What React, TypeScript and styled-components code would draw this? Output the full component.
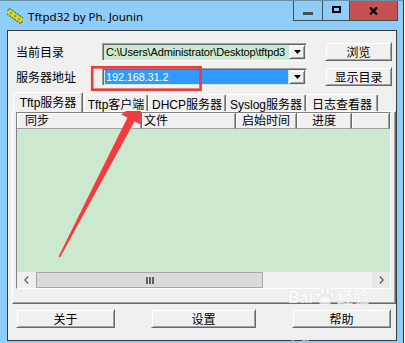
import styled, { createGlobalStyle } from "styled-components";

const GlobalStyle = createGlobalStyle`
  html, body {
    margin: 0;
    padding: 0;
    background: #ffffff;
    overflow: hidden;
  }
  #root {
    width: 405px;
    height: 343px;
    overflow: hidden;
  }
`;

const UI = `"Liberation Sans", "Noto Sans CJK SC", sans-serif`;

type Col = { label: string; width?: number; pad?: number; center?: boolean };

const columns: Col[] = [
  { label: "同步", width: 125, pad: 8 },
  { label: "文件", width: 94, pad: 2 },
  { label: "启始时间", width: 61, center: true },
  { label: "进度", width: 55, center: true },
  { label: "" },
];

const tabs = [
  { label: "Tftp服务器", width: 70, active: true },
  { label: "Tftp客户端", width: 64 },
  { label: "DHCP服务器", width: 78 },
  { label: "Syslog服务器", width: 80 },
  { label: "日志查看器", width: 72 },
];

const AppIcon = () => (
  <svg width="16" height="16" viewBox="0 0 16 16">
    <g transform="rotate(35 8 8)">
      <rect x="-1" y="5" width="18" height="6" fill="#e9d43a" stroke="#1f8a1f" strokeWidth="1.2" strokeDasharray="2 1" />
      <circle cx="3" cy="8" r="1.4" fill="#b8a010" />
      <circle cx="8" cy="8" r="1.4" fill="#b8a010" />
      <circle cx="13" cy="8" r="1.4" fill="#b8a010" />
    </g>
  </svg>
);

const DownArrow = () => (
  <svg width="7" height="4" viewBox="0 0 7 4">
    <path d="M0 0h7L3.5 4z" fill="#000" />
  </svg>
);

const Chevron = ({ right }: { right?: boolean }) => (
  <svg width="5" height="8" viewBox="0 0 5 8">
    <path d={right ? "M0.8 0.5L4.2 4L0.8 7.5" : "M4.2 0.5L0.8 4L4.2 7.5"} fill="none" stroke="#606060" strokeWidth="1.3" />
  </svg>
);

const Grip = () => (
  <svg width="8" height="7" viewBox="0 0 8 7">
    <rect x="0" y="0" width="2" height="7" fill="#606060" />
    <rect x="3" y="0" width="2" height="7" fill="#606060" />
    <rect x="6" y="0" width="2" height="7" fill="#606060" />
  </svg>
);

const Paw = () => (
  <svg width="22" height="20" viewBox="0 0 22 20">
    <g fill="#ffffff" stroke="#dcdcdc" strokeWidth="0.8">
      <ellipse cx="11" cy="14" rx="6" ry="5" />
      <ellipse cx="4" cy="8" rx="2.4" ry="3" />
      <ellipse cx="8.5" cy="4" rx="2.4" ry="3.2" />
      <ellipse cx="13.5" cy="4" rx="2.4" ry="3.2" />
      <ellipse cx="18" cy="8" rx="2.4" ry="3" />
    </g>
  </svg>
);

const App = () => {
  return (
    <>
      <GlobalStyle />
      <Window>
        <TitleBar>
          <AppIcon />
          <Title>Tftpd32 by Ph. Jounin</Title>
          <Caption>
            <CaptionButton $w={29}>
              <MinGlyph />
            </CaptionButton>
            <CaptionButton $w={27}>
              <MaxGlyph />
            </CaptionButton>
            <CaptionButton $w={49} $close>
              <svg width="9" height="8" viewBox="0 0 9 8">
                <path d="M1 0.5L8 7.5M8 0.5L1 7.5" stroke="#000" strokeWidth="2.2" />
              </svg>
            </CaptionButton>
          </Caption>
        </TitleBar>

        <Client>
          <Form>
            <Label>当前目录</Label>
            <Combo>
              <Field>C:\Users\Administrator\Desktop\tftpd3</Field>
              <DropButton>
                <DownArrow />
              </DropButton>
            </Combo>
            <Button>浏览</Button>

            <Label>服务器地址</Label>
            <Combo>
              <Field $selected>192.168.31.2</Field>
              <DropButton>
                <DownArrow />
              </DropButton>
            </Combo>
            <Button>显示目录</Button>
          </Form>

          <TabStrip>
            {tabs.map((t) => (
              <Tab key={t.label} $w={t.width} $active={!!t.active}>
                {t.label}
              </Tab>
            ))}
          </TabStrip>

          <TabPanel>
            <ListView>
              <HeaderRow>
                {columns.map((c, i) => (
                  <HeaderCell key={i} $w={c.width} $pad={c.pad} $center={c.center}>
                    {c.label}
                  </HeaderCell>
                ))}
              </HeaderRow>
              <ListBody />
              <ScrollBar>
                <ScrollArrow>
                  <Chevron />
                </ScrollArrow>
                <Track>
                  <Thumb $w={227}>
                    <Grip />
                  </Thumb>
                </Track>
                <ScrollArrow $dim>
                  <Chevron right />
                </ScrollArrow>
              </ScrollBar>
            </ListView>
          </TabPanel>

          <Footer>
            <Button $w={99}>关于</Button>
            <Button $w={105}>设置</Button>
            <Button $w={99}>帮助</Button>
          </Footer>
        </Client>

        <Annotation width="405" height="343" viewBox="0 0 405 343">
          <rect x="92.2" y="67.3" width="108.4" height="22.4" fill="none" stroke="#ec3b3b" strokeWidth="2.6" />
          <polygon
            points="141,100 140.7,124.6 134.5,121.4 60,257.5 58.6,256.6 127.5,117.6 121.3,114.4"
            fill="#f03c3c"
          />
        </Annotation>

        <Watermark>
          <WmLogo>
            Bai
            <Paw />
            经验
          </WmLogo>
          <WmUrl>jingyan.baidu.com</WmUrl>
        </Watermark>
      </Window>
    </>
  );
};

export default App;

const Window = styled.div`
  position: relative;
  box-sizing: border-box;
  width: 404px;
  height: 360px;
  padding: 0 6px 0 7px;
  background: #8fcdf9;
  border-top: 1px solid #6d8fa6;
  border-right: 1px solid #2f3b44;
  display: flex;
  flex-direction: column;
`;

const TitleBar = styled.div`
  height: 29px;
  display: flex;
  align-items: center;
  gap: 5px;
  flex-shrink: 0;
`;

const Title = styled.div`
  font-family: "Noto Sans", sans-serif;
  font-size: 11.5px;
  color: #000;
  margin-top: 1px;
`;

const Caption = styled.div`
  display: flex;
  align-self: flex-start;
  margin-left: auto;
  margin-right: -1px;
  height: 20px;
`;

const CaptionButton = styled.div<{ $w: number; $close?: boolean }>`
  box-sizing: border-box;
  width: ${(p) => p.$w}px;
  height: 20px;
  display: flex;
  align-items: center;
  justify-content: center;
  background: ${(p) => (p.$close ? "#c75050" : "transparent")};
  border-left: 1px solid #3e4e5a;
  border-bottom: 1px solid #3e4e5a;
  ${(p) => (p.$close ? "border-right: 1px solid #3e4e5a;" : "")}
`;

const MinGlyph = styled.span`
  width: 10px;
  height: 3px;
  background: #4d4d4d;
  margin-top: 6px;
`;

const MaxGlyph = styled.span`
  box-sizing: border-box;
  width: 9px;
  height: 7px;
  border: 2px solid #000;
  margin-top: -2px;
`;

const Client = styled.div`
  box-sizing: border-box;
  height: 311px;
  border: 1px solid #3a3a3a;
  background: #f0f0f0;
  display: flex;
  flex-direction: column;
  font-family: ${UI};
  font-size: 12px;
  color: #000;
`;

const Form = styled.div`
  display: grid;
  grid-template-columns: 68px 205px 67px;
  grid-auto-rows: 19px;
  column-gap: 18px;
  row-gap: 6px;
  margin: 11px 0 0 8px;
  align-items: center;
`;

const Label = styled.div`
  font-size: 12px;
  white-space: nowrap;
`;

const Combo = styled.div`
  box-sizing: border-box;
  height: 18px;
  display: flex;
  align-items: stretch;
  gap: 1px;
  padding: 1px 1px 1px 2px;
  background: #cce8cf;
  border: 1px solid;
  border-color: #a0a0a0 #ffffff #ffffff #a0a0a0;
  box-shadow: inset 1px 1px 0 #696969;
`;

const Field = styled.div<{ $selected?: boolean }>`
  flex: 1;
  min-width: 0;
  overflow: hidden;
  white-space: nowrap;
  font-family: "Liberation Sans", sans-serif;
  font-size: 11px;
  letter-spacing: -0.15px;
  line-height: 14px;
  padding-left: 1px;
  background: ${(p) => (p.$selected ? "#3399ff" : "transparent")};
  color: ${(p) => (p.$selected ? "#ffffff" : "#000000")};
`;

const Raised = styled.div`
  box-sizing: border-box;
  background: #f0f0f0;
  border: 1px solid;
  border-color: #f0f0f0 #696969 #696969 #f0f0f0;
  box-shadow: inset 1px 1px 0 #ffffff, inset -1px -1px 0 #a0a0a0;
`;

const DropButton = styled(Raised)`
  width: 16px;
  flex-shrink: 0;
  display: flex;
  align-items: center;
  justify-content: center;
`;

const Button = styled(Raised)<{ $w?: number }>`
  width: ${(p) => (p.$w ? `${p.$w}px` : "auto")};
  height: 19px;
  display: flex;
  align-items: center;
  justify-content: center;
  font-size: 12px;
  white-space: nowrap;
`;

const TabStrip = styled.div`
  display: flex;
  align-items: flex-end;
  height: 19px;
  margin: 6px 0 0 5px;
  position: relative;
  z-index: 1;
`;

const Tab = styled.div<{ $w: number; $active: boolean }>`
  box-sizing: border-box;
  width: ${(p) => p.$w}px;
  height: ${(p) => (p.$active ? 20 : 17)}px;
  margin-bottom: ${(p) => (p.$active ? -1 : 0)}px;
  margin-right: ${(p) => (p.$active ? 1 : 0)}px;
  display: flex;
  align-items: center;
  justify-content: center;
  padding-bottom: ${(p) => (p.$active ? 2 : 0)}px;
  background: #f0f0f0;
  border-top: 1px solid #ffffff;
  border-left: 1px solid #ffffff;
  border-right: 1px solid #696969;
  box-shadow: inset -1px 0 0 #a0a0a0;
  border-radius: 2px 2px 0 0;
  white-space: nowrap;
  font-size: 12px;
`;

const TabPanel = styled.div`
  box-sizing: border-box;
  height: 193px;
  margin-left: 4px;
  padding: 0 4px 14px 3px;
  border: 1px solid;
  border-color: #ffffff #696969 #696969 #ffffff;
  box-shadow: inset -1px -1px 0 #a0a0a0;
  display: flex;
  flex-direction: column;
`;

const ListView = styled.div`
  box-sizing: border-box;
  width: 375px;
  flex: 1;
  display: flex;
  flex-direction: column;
  border: 1px solid;
  border-color: #828282 #ffffff #ffffff #828282;
  background: #cce8cf;
`;

const HeaderRow = styled.div`
  display: flex;
  height: 16px;
  background: #f0f0f0;
  flex-shrink: 0;
`;

const HeaderCell = styled.div<{ $w?: number; $pad?: number; $center?: boolean }>`
  box-sizing: border-box;
  ${(p) => (p.$w ? `width: ${p.$w}px;` : "flex: 1;")}
  display: flex;
  align-items: flex-end;
  justify-content: ${(p) => (p.$center ? "center" : "flex-start")};
  padding-left: ${(p) => p.$pad ?? 0}px;
  border-right: 1px solid #696969;
  border-bottom: 1px solid #a0a0a0;
  box-shadow: inset 1px 1px 0 #ffffff, inset -1px 0 0 #a0a0a0;
  font-size: 12px;
  line-height: 14px;
  white-space: nowrap;
`;

const ListBody = styled.div`
  flex: 1;
  background: #cce8cf;
`;

const ScrollBar = styled.div`
  height: 16px;
  display: flex;
  background: #f0f0f0;
  flex-shrink: 0;
`;

const ScrollArrow = styled.div<{ $dim?: boolean }>`
  width: 18px;
  display: flex;
  align-items: center;
  justify-content: center;
  background: ${(p) => (p.$dim ? "#e8e8e8" : "#f0f0f0")};
`;

const Track = styled.div`
  flex: 1;
  display: flex;
  align-items: stretch;
  padding: 0 0 0 1px;
`;

const Thumb = styled.div<{ $w: number }>`
  box-sizing: border-box;
  width: ${(p) => p.$w}px;
  display: flex;
  align-items: center;
  justify-content: center;
  background: #dadada;
  border: 1px solid #a8a8a8;
`;

const Footer = styled.div`
  display: flex;
  gap: 36px;
  margin: 5px 0 0 8px;
`;

const Annotation = styled.svg`
  position: absolute;
  left: 0;
  top: -1px;
  pointer-events: none;
`;

const Watermark = styled.div`
  position: absolute;
  left: 288px;
  top: 286px;
  display: flex;
  flex-direction: column;
  align-items: center;
  pointer-events: none;
  opacity: 0.7;
`;

const WmLogo = styled.div`
  display: flex;
  align-items: flex-end;
  gap: 1px;
  font-family: "Liberation Sans", "Noto Sans CJK SC", sans-serif;
  font-weight: bold;
  font-size: 16px;
  line-height: 18px;
  color: #ffffff;
  text-shadow: 0 0 1px #c8c8c8;
`;

const WmUrl = styled.div`
  font-family: "Liberation Sans", sans-serif;
  font-size: 9px;
  color: #ffffff;
  text-shadow: 0 0 1px #d0d0d0;
  margin-top: 24px;
`;
